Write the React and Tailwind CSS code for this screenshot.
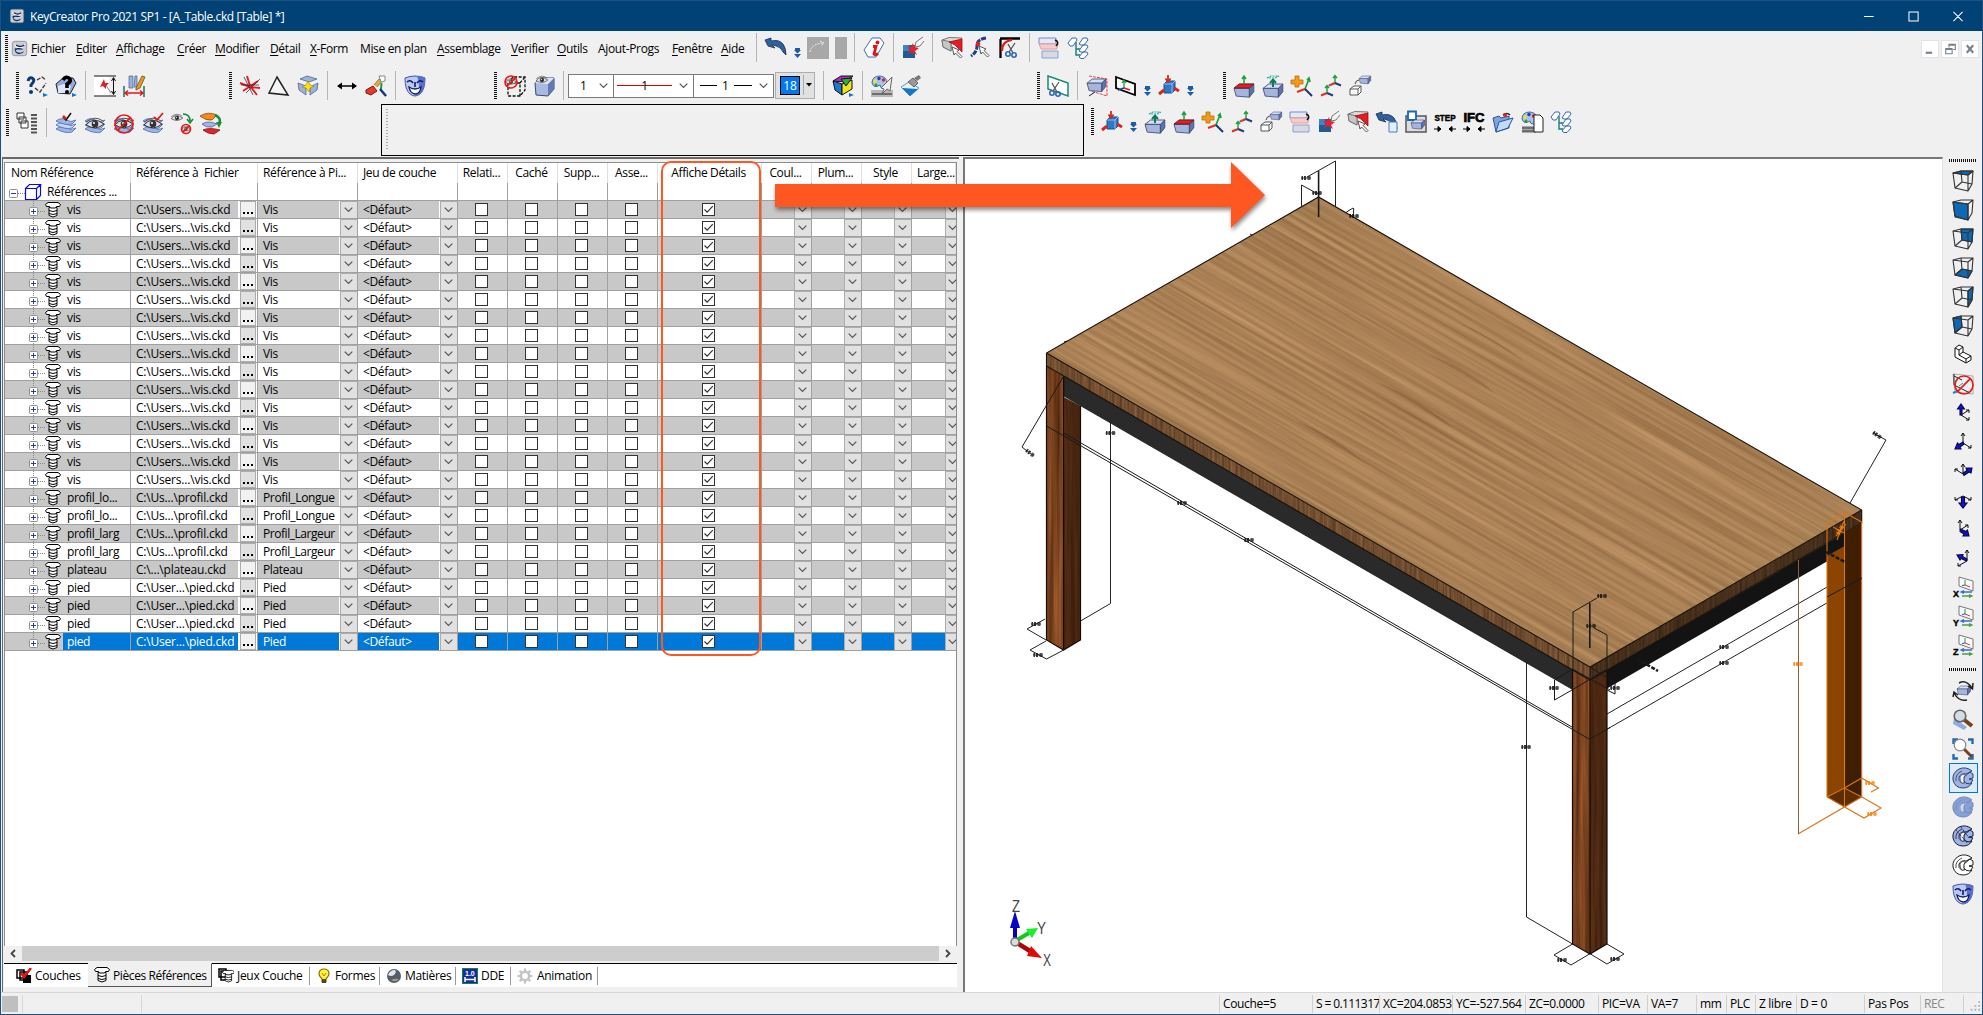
import React from "react";

/* ---------- small drawing primitives shared by the icons ---------- */
const Axes = ({ x = 0, y = 0 }) => (
  <g transform={`translate(${x} ${y})`} strokeWidth="1.4" fill="none">
    <path d="M0 0V-7M-2-5L0-7.500L2-5" stroke="#18a038" />
    <path d="M0 0L-6 2.500" stroke="#e03020" strokeWidth="2" />
    <path d="M0 0L6 2.500" stroke="#203c80" strokeWidth="2" />
  </g>
);
const Box = ({ x = 0, y = 0, s = 1 }) => (
  <g transform={`translate(${x} ${y}) scale(${s})`} stroke="#444c70" strokeWidth="0.8">
    <path d="M0 4L5 0H18L14 4Z" fill="#d4def6" />
    <path d="M0 4H14V12L2 11Z" fill="#a5b5de" />
    <path d="M14 4L18 0V7L14 12Z" fill="#5d72ae" />
  </g>
);
const Eye = ({ x = 11, y = 11, s = 1 }) => (
  <g transform={`translate(${x} ${y}) scale(${s})`}>
    <path d="M-9 1Q-2-8 9 0Q1 7-9 1Z" fill="#e2e2e2" stroke="#333" strokeWidth="1" />
    <path d="M-9-2Q0-9 8-3" stroke="#555" fill="none" />
    <circle r="3.3" fill="#333" />
    <circle cx="-1" cy="-1" r="1" fill="#fff" />
  </g>
);
const Ban = ({ x = 11, y = 11, r = 9 }) => (
  <g stroke="#e01c1c" strokeWidth="1.7" fill="none">
    <circle cx={x} cy={y} r={r} />
    <path d={`M${x - r * 0.7} ${y + r * 0.7}L${x + r * 0.7} ${y - r * 0.7}`} />
  </g>
);
const Layers = () => (
  <g fill="#9db6ea" stroke="#5673b8" strokeWidth="0.9">
    <path d="M1 17Q6 13 11 16T21 16L17 20Q11 22 1 17Z" />
    <path d="M1 13Q6 9 11 12T21 12L17 16Q11 18 1 13Z" fill="#c7d6f7" />
    <path d="M1 9Q6 5 11 8T21 8L17 12Q11 14 1 9Z" />
  </g>
);
const Pointer = ({ x = 0, y = 0 }) => (
  <path transform={`translate(${x} ${y})`} d="M0 0L7 3L5 4.5L10 9.5L8.5 11L3.5 6L2 8Z" fill="#fff" stroke="#444" strokeWidth="0.9" />
);
const Cube = ({ face }) => (
  <g stroke="#333" strokeWidth="1.1" fill="none" strokeLinejoin="round">
    {face === "top" && <path d="M1 3L9 1H21L16 5Z" fill="#0a6ab8" />}
    {face === "front" && <path d="M1 3L16 5L16 21L3 17Z" fill="#0a6ab8" />}
    {face === "back" && <path d="M9 1H21L20 14L10 12Z" fill="#0a6ab8" />}
    {face === "bottom" && <path d="M3 18L10 12L20 14L16 21Z" fill="#0a6ab8" />}
    {face === "right" && <path d="M16 5L21 1L20 14L16 21Z" fill="#0a6ab8" />}
    {face === "left" && <path d="M1 3L9 1L10 12L3 18Z" fill="#0a6ab8" />}
    <path d="M1 3L9 1H21L16 5ZM1 3L3 18L16 21L16 5M21 1L20 14L16 21" />
    {face !== "front" && <path d="M9 1L10 12L20 14M10 12L3 18" />}
  </g>
);
const Ring = ({ fill = "#9db4e4", stroke = "#33406c", hole = "#f4f7ff" }) => (
  <g fill={fill} stroke={stroke} strokeWidth="1">
    <path d="M20 4Q14-1 7 2Q0 6 1 13Q3 21 11 21Q17 21 20 16L16 13Q13 17 9.500 16Q6 14 7 10Q9 6 14 7Z" />
    <path d="M8 10Q9 7 13 7L12 16Q8 17 8 10Z" fill={hole} strokeWidth="0.700" />
    <path d="M12 10L18 5L21 7V11L17 12L21 13L18 17Q13 17 12 14Z" />
    <path d="M4 14Q3 7 10 4" fill="none" strokeWidth="0.800" />
  </g>
);
const Mask = () => (
  <g>
    <path d="M1 3Q11-1 21 3Q21 15 16 19Q11 23 6 19Q1 15 1 3Z" fill="#b9c8f4" stroke="#4255a8" />
    <path d="M13 1Q21 1 21 4Q21 15 16 19L11 21Q18 12 13 1Z" fill="#5b70cc" />
    <path d="M3 7Q6 4 9 8M13 8Q16 4 19 7M11 7V12" stroke="#101c60" strokeWidth="1.6" fill="none" />
    <path d="M5 12Q11 16 17 12Q16 19 11 19Q6 18 5 12Z" fill="#fff" stroke="#101c60" strokeWidth="1.3" />
  </g>
);
const Triad = ({ arrow }) => {
  const thin = {
    up: "M9 13L17 8M14 8H17V11M9 13L17 18M17 15V18H14",
    sw: "M11 12V2M9 5L11 2L13 5M11 12L19 17M19 14V17H16",
    ne: "M11 14V4M9 7L11 4L13 7M11 14L3 9M3 12V9H6",
    down: "M11 7L3 11M3 8V11H6M11 7L19 11M19 8V11H16",
    se: "M8 12V2M6 5L8 2L10 5M8 12L16 7M13 7H16V10",
    nw: "M15 14V3M13 6L15 3L17 6M15 14L6 19M6 16V19H9",
  };
  const fat = {
    up: "M8 13V7H5.500L9 2L12.500 7H10V13Z",
    sw: "M11 11L7 13.500L5.500 12L3 18H9L8 16L12 13Z",
    ne: "M11 13L15 10.500L14 8L20 8L19 13L17 12L12 15.500Z",
    down: "M9.500 8H12.500V14H15L11 19L7 14H9.500Z",
    se: "M8.500 11L14 13.500L15.500 12L17 18H11L12 16L8 13.500Z",
    nw: "M14.500 14L9 11.500L8 13L5 8L11 7.500L10.500 9.500L15 12Z",
  };
  return (
    <g fill="none" stroke="#111" strokeWidth="1">
      <path d={thin[arrow]} />
      <path d={fat[arrow]} stroke="#08083c" strokeWidth="1.1" fill="#1010e0" />
    </g>
  );
};
const PlaneAxis = ({ name }) => (
  <g>
    <path d="M7 1L21 5V15L7 10Z" fill="#fafafa" stroke="#777" />
    <path d="M13 9V4" stroke="#18a038" /><path d="M13 9L10 9.500" stroke="#3050c0" /><path d="M13 9L18 11" stroke="#e03020" />
    <path d="M9 16H20M12 14.500L9 16L12 17.500" stroke="#3c6ed0" strokeWidth="1.3" fill="none" /><path d="M10 20H20M17 18.500L20 20L17 21.500" stroke="#4aa040" strokeWidth="1.3" fill="none" />
    <text x="1" y="21" fontSize="9" fontWeight="900" letterSpacing="0" fontFamily="Liberation Sans, sans-serif" stroke="#000" strokeWidth="0.400">{name}</text>
  </g>
);
const Undo = () => <path d="M0 3L6 1L6 4Q14 2 18 7Q21 11 21 18L18 15Q16 10 11 9Q9 8 7 8L10 11L3 9Z" fill="#2f619f" stroke="#142c54" strokeWidth="0.8" />;
const Palette = () => (
  <g>
    <path d="M1 8Q1 1 9 1Q16 2 16 8Q16 14 12 13Q9 13 9 10Q3 14 1 8Z" fill="#a8c2e8" stroke="#47689c" />
    <circle cx="4" cy="6" r="1.700" fill="#ffe320" /><circle cx="8" cy="3.500" r="1.700" fill="#1d44b8" /><circle cx="12.500" cy="5" r="1.700" fill="#e02020" /><circle cx="5" cy="10" r="1.500" fill="#20a030" />
  </g>
);
const Bolt = () => (
  <g fill="#fff" stroke="#000" strokeWidth="1">
    <path d="M4 5.500H12V13.500Q8 16.500 4 13.500Z" /><path d="M4 8.500Q8 10.500 12 8.500M4 11.500Q8 13.500 12 11.500" fill="none" />
    <path d="M0.500 2.500L3 0.500H13L15.500 2.500L14.500 4.500H11.500L10.500 6H5.500L4.500 4.500H1.500Z" />
  </g>
);
const Logo = () => (
  <g>
    <rect x="0.500" y="0.500" width="21" height="21" rx="3" fill="#c9ccd2" stroke="#777d88" />
    <path d="M3 4Q11 11 19 4Q20 9 12 11Q5 11 3 4Z" fill="#fff" /><path d="M4 11Q11 9 17 12Q10 13 8 12L5 14Q9 20 18 15Q15 20 9 19Q4 18 4 11Z" fill="#0c2a66" /><path d="M6 6Q12 10 18 6" stroke="#0c2a66" strokeWidth="2" fill="none" />
  </g>
);

const Scissors = ({ x = 0, y = 0 }) => (
  <g transform={`translate(${x} ${y})`} fill="none">
    <path d="M10 0L4 9M3 1L8 10" stroke="#555" strokeWidth="1.300" /><circle cx="3" cy="11" r="2.200" stroke="#2f68b8" strokeWidth="1.600" /><circle cx="9" cy="12" r="2.200" stroke="#2f68b8" strokeWidth="1.600" />
  </g>
);
const AxesCube = (
  <g>
    <path d="M6 9L9 6H17V15L14 18H6Z" fill="#2b78cc" stroke="#1c4e8c" /><path d="M6 9H14V18M14 9L17 6" stroke="#8cc0f0" fill="none" />
    <path d="M10 0V6M7.500 3.500L10 7L12.500 3.500" stroke="#d82818" strokeWidth="1.800" fill="none" /><path d="M1 19L6 15M16 13L21 16" stroke="#d82818" strokeWidth="3" />
  </g>
);
const I = {
  logo: <Logo />,
  undo: <Undo />,
  info: <g><path d="M9 1H17L21 6L13 20H5L1 13Z" fill="#fff" stroke="#3a6fb8" /><path d="M10 9.500H13L11 17Q12 18.500 15 16.500" stroke="#e01414" strokeWidth="2.800" fill="none" /><circle cx="14.500" cy="5.500" r="1.900" fill="#e01414" /></g>,
  star: <g><path d="M1 8H13V21H1Z" fill="#1d5c94" /><path d="M1 8H7V14H1Z" fill="#3b87c4" /><path d="M11 6L12 10L17 11L13 14L15 18L10 15L6 17L8 13L5 10L9 10Z" fill="#e8202c" /><path d="M21 0L14 5L13 10L18 9L22 4" fill="#f4f4f4" stroke="#777" /></g>,
  face: <g><path d="M1 3L8 0.500L21 1L20 4L10 5V14L2 10Z" fill="#dcdcdc" stroke="#777" /><path d="M1 3L10 5V14L2 10Z" fill="#c6c6c6" stroke="#777" /><path d="M8 5L21 2V15L14 8Z" fill="#e41c24" stroke="#900" strokeWidth="0.700" /><Pointer x={11} y={10} /></g>,
  curve: <g><path d="M16 1Q7 2 7 9Q7 15 1 19" stroke="#223f80" strokeWidth="3" fill="none" strokeDasharray="5 1" /><circle cx="8" cy="7" r="2.300" fill="#e62020" /><Pointer x={9} y={9} /></g>,
  fillet: <g><path d="M1.500 21V2M1 1.500H21" stroke="#000" strokeWidth="2.300" fill="none" /><path d="M3 14Q3 4 13 3" stroke="#e01c1c" strokeWidth="2.200" fill="none" /><Scissors x={6} y={6} /></g>,
  sheet: <g><path d="M1 1H18V7H1Z" fill="#e4e8f2" stroke="#6e8cd4" /><path d="M1 7H20L19 12H3Z" fill="#f4cccc" stroke="#e6a0a0" /><path d="M4 14H20V21H4Z" fill="#d8dae0" stroke="#88a0d8" /><path d="M17 3Q22 5 18 9" stroke="#111" fill="none" strokeWidth="1.500" /></g>,
  tree: <g fill="#fff" stroke="#3468b4"><path d="M9 5V18H13M9 12H13" stroke="#158070" fill="none" strokeWidth="1.400" /><path d="M1 6L5 1H9L10 3L6 9H3ZM12 7L16 1H20L21 3L17 8H14ZM12 14L16 8H20L21 10L17 15H14ZM12 20L16 15H20L21 17L17 21.500H14Z" /></g>,
  qmark: <g><path d="M2 6Q3 2 6 3Q10 5 5 10V12" stroke="#0c3a78" strokeWidth="3" fill="none" /><circle cx="5" cy="17" r="2" fill="#0c3a78" /><path d="M9 13L14 17L20 8M11 5L16 2L20 5" stroke="#333" strokeWidth="1.300" fill="none" strokeDasharray="4 1.500" /><path d="M17 18L22 20L17 22Z" fill="#0878d8" /></g>,
  qbox: <g><path d="M1 9L8 3H18L21 8L15 19L3 18Z" fill="#96a9d8" stroke="#223" /><path d="M3 11L9 9L16 11L14 18H3Z" fill="#dfe6f8" /><path d="M8 5Q11 0 15 4Q16 7 12 9V13" stroke="#000" strokeWidth="3.600" fill="none" /><circle cx="12" cy="17" r="2" /><path d="M17 18L22 20L17 22Z" fill="#0878d8" /></g>,
  mesV: <g><rect x="0" y="1" width="15" height="20" fill="#fff" /><path d="M0 1H22M0 21H22M19.500 3V19M17.500 6L19.500 2.500L21.500 6M17.500 16L19.500 19.500L21.500 16" stroke="#111" fill="none" strokeWidth="1" /><path d="M11 9L17 18" stroke="#888" /><path d="M10 4L11 8L15 8L12 11L12 14L9 11L6 12L8 8Z" fill="#e41c24" /></g>,
  mesH: <g><path d="M6 1H10V13H6ZM12 1H14V12H11Z" fill="#9db1de" stroke="#4a5f94" strokeWidth="0.700" /><path d="M1 11V22M21 11V22" stroke="#107868" strokeWidth="1.500" /><path d="M2 18H20M5 15.500L2 18L5 20.500M17 15.500L20 18L17 20.500" stroke="#e01818" strokeWidth="1.500" fill="none" /><path d="M13 13L19 1L22 2L17 13L13 15Z" fill="#e79b22" stroke="#714a12" strokeWidth="0.800" /></g>,
  redx: <g><path d="M8 1L11 11L18 20M1 8L11 12L21 13M4 16L19 6" stroke="#e41c24" strokeWidth="1.900" fill="none" /><path d="M5 2L14 20M2 10L20 10M7 18L21 4" stroke="#222" strokeWidth="0.700" /></g>,
  tri: <path d="M9 2L20 20L1 18Z" fill="#f4f4f4" stroke="#222" strokeWidth="1.500" />,
  explode: <g><path d="M3 4L10 1L20 4L12 7ZM1 8L9 11V20L2 15ZM21 8L13 12V20L20 15Z" fill="#9db2d8" stroke="#516594" strokeWidth="0.800" /><path d="M11 6L13 10L17 11L13 13L12 17L9 13L5 12L9 10Z" fill="#ffe400" stroke="#a08000" strokeWidth="0.600" /></g>,
  harrow: <g><path d="M3 11H19" stroke="#000" strokeWidth="1.500" /><path d="M6 7.500L1 11L6 14.500ZM16 7.500L21 11L16 14.500Z" /></g>,
  wrench: <g><path d="M1 15L8 11L12 16L6 20L1 18Z" fill="#e23c28" stroke="#7d1810" /><path d="M9 10L14 4L17 6L12 12" fill="#e8a848" stroke="#9a6018" strokeWidth="0.800" /><path d="M14 1L20 1V6L16 7Z" fill="#fff" stroke="#888" /><path d="M16.500 8L16 14" stroke="#18a040" strokeWidth="2" fill="none" /><path d="M15 14L21 21" stroke="#14347c" strokeWidth="2.500" /></g>,
  mask: <Mask />,
  banbox: <g><path d="M4 8L9 2H21V15L16 21H4ZM4 8H16V21M16 8L21 2" stroke="#111" strokeWidth="1.300" strokeDasharray="3 1.500" fill="none" /><Eye x={7} y={7} s={0.600} /><Ban x={7} y={7} r={6} /></g>,
  eyebox: <g><path d="M2 8L8 3H21V14L15 21L3 20Z" fill="#a9b9e2" stroke="#38466c" /><path d="M15 9L21 3V14L15 21Z" fill="#647ab4" /><path d="M2 8L8 3H21L15 9Z" fill="#dce4f6" /><Eye x={9} y={5} s={0.650} /></g>,
  rgbbox: <g stroke="#111" strokeWidth="1"><path d="M1 6L9 1H21L14 7Z" fill="#b030c0" /><path d="M1 6L10 9V20L3 15Z" fill="#1c78d0" /><path d="M10 9L20 5V14L10 20Z" fill="#f2e51c" /><path d="M9 4L14 11L20 3Z" fill="#2cb03a" /><path d="M17 18L22 20L17 22Z" fill="#0878d8" stroke="none" /></g>,
  palette: <g><path d="M0 15H22V22H0Z" fill="#b8b8b8" /><path d="M1 19H21" stroke="#555" strokeWidth="1.500" /><Palette /><path d="M21 2L10 13L13 14L11 19L16 14L19 16Z" fill="#eee" stroke="#666" /></g>,
  paint: <g><path d="M1 12L9 7L19 13L10 21Z" fill="#e8f2fc" stroke="#5898d4" /><path d="M2 13L18 14L10 21Z" fill="#1674c4" /><path d="M8 7L13 3L18 8L14 12Z" fill="#999" stroke="#666" /><path d="M14 3L19 0L21 3L17 6Z" fill="#777" /></g>,
  cutplane: <g><path d="M1 1L21 8V21L1 14Z" fill="#fff" stroke="#158878" strokeWidth="1.500" /><Scissors x={2} y={7} /></g>,
  secbox: <g><path d="M3 1L21 4V21L5 16" fill="none" stroke="#e44" strokeDasharray="3 1" /><Box x={1} y={4} s={1.050} /><path d="M3 21L9 17" stroke="#222" /></g>,
  plane: <g><path d="M1 2L20 9V20L1 13Z" fill="#fafafa" stroke="#000" strokeWidth="1.800" /><path d="M9 13V6M7 8L9 5L11 8" stroke="#18a038" fill="none" strokeWidth="1.300" /><path d="M9 13L3 15" stroke="#2440a0" strokeWidth="1.500" /><path d="M9 13L15 15" stroke="#d02828" strokeWidth="1.500" /></g>,
  axcube: AxesCube,
  boxred: <g><Box x={1} y={9} s={1.100} /><path d="M1 13L6 9H21L16 13Z" fill="#e41c24" stroke="#611" strokeWidth="0.700" /><path d="M11 9V1M9 4L11 1L13 4" stroke="#18a038" strokeWidth="1.500" fill="none" /></g>,
  boxup: <g><Box x={1} y={9} s={1.100} /><path d="M11 12V5M8 8L11 4.500L14 8" stroke="#0c7a58" strokeWidth="2" fill="none" /><path d="M5 3L9 1H17L13 3Z" stroke="#20b0a0" strokeWidth="1.200" strokeDasharray="2 1" fill="none" /></g>,
  plus: <g><path d="M4 1H8V5H12V9H8V12H4V9H0V5H4Z" fill="#f39a1c" stroke="#b86e08" strokeWidth="0.800" /><path d="M14 14L18 4M16 5L18 3L19 7" stroke="#18a038" strokeWidth="1.700" fill="none" /><path d="M14 14L6 17" stroke="#e03020" strokeWidth="2.200" /><path d="M14 14L21 21" stroke="#1c3470" strokeWidth="2" /></g>,
  axes2: <g><Axes x={15} y={8} /><Axes x={7} y={18} /><path d="M8 11L14 7" stroke="#999" strokeDasharray="1 1" /></g>,
  boxes2: <g><Box x={10} y={1} s={0.650} /><path d="M1 14L5 11H12V17L9 20H1ZM1 14H9V20M9 14L12 11" fill="#fff" stroke="#555" /><path d="M6 9Q7 5 10 5" stroke="#444" fill="none" /></g>,
  undopage: <g><Undo /><path d="M13 11H21V21H13Z" fill="#e3efff" stroke="#4b7ac0" /></g>,
  savebox: <g><path d="M1 5H21V21H1Z" fill="#ddd" stroke="#555" strokeWidth="1.500" /><path d="M3 0.500H11V9H3Z" fill="#fff" stroke="#1468b4" strokeWidth="1.800" /><Box x={6} y={9} s={0.750} /></g>,
  step: <g><text x="0.500" y="10" fontSize="9" fontWeight="900" letterSpacing="0" fontFamily="Liberation Sans, sans-serif" textLength="21" lengthAdjust="spacingAndGlyphs" stroke="#000" strokeWidth="0.500">STEP</text><path d="M0 18H7M4 15.500L7 18L4 20.500ZM22 18H15M18 15.500L15 18L18 20.500Z" stroke="#000" strokeWidth="1" /></g>,
  ifc: <g><text x="0.500" y="11" fontSize="13" fontWeight="900" letterSpacing="0" fontFamily="Liberation Sans, sans-serif" textLength="21" lengthAdjust="spacingAndGlyphs" stroke="#000" strokeWidth="0.700">IFC</text><path d="M0 18H7M4 15.500L7 18L4 20.500ZM22 18H15M18 15.500L15 18L18 20.500Z" stroke="#000" strokeWidth="1" /></g>,
  folder: <g><path d="M1 7L7 5L9 7L17 5V17L4 21Z" fill="#7da4dc" stroke="#2c549c" /><path d="M7 11L21 7L16 17L4 21Z" fill="#c3dbf8" stroke="#2c549c" /><path d="M11 4Q15 1 18 4" stroke="#222" strokeWidth="1.500" fill="none" /><circle cx="13" cy="4" r="2" fill="#e02020" /></g>,
  palpage: <g><path d="M1 15H15V22H1Z" fill="#aaa" /><path d="M1 17H15M1 20H15" stroke="#333" /><Palette /><path d="M13 4H19L22 7V21H13Z" fill="#fff" stroke="#222" /></g>,
  list: <g fill="#fff" stroke="#333"><path d="M1 1H8V7H1ZM3 5H10V11H3ZM5 9H12V16H5Z" /><path d="M15 3H21M15 6.500H21M15 10H21M15 13.500H21M15 17H21M15 20.500H21" strokeWidth="2" stroke="#555" /></g>,
  laycheck: <g><Layers /><path d="M8 5L11 8L16 1" stroke="#111" strokeWidth="1.500" fill="none" /><path d="M8 4L11 7" stroke="#e01c1c" strokeWidth="2.500" /></g>,
  layeye: <g><Layers /><Eye y={12} /></g>,
  layban: <g><Layers /><Eye y={12} /><Ban y={12} /></g>,
  layeyecheck: <g><Layers /><Eye y={12} /><path d="M12 5L15 8L21 1" stroke="#e01c1c" strokeWidth="1.800" fill="none" /></g>,
  swap: <g><Eye x={6} y={6} s={0.650} /><path d="M12 2Q19 2 19 9M16 7L19 11L22 7" stroke="#18883c" strokeWidth="1.600" fill="none" /><Eye x={15} y={17} s={0.500} /><Ban x={15} y={17} r={4.500} /></g>,
  laymove: <g><path d="M0 4Q8-1 17 3L12 8Q6 9 0 4Z" fill="#f28a1c" stroke="#8c4a08" strokeWidth="0.800" /><path d="M2 12Q8 8 17 12L12 15Q6 16 2 12Z" fill="#9fb5e8" stroke="#4a64a8" strokeWidth="0.800" /><path d="M3 18Q9 15 20 18L14 22Q8 22 3 18Z" fill="#e42424" stroke="#801010" strokeWidth="0.800" /><path d="M15 3Q22 6 19 12" stroke="#1c8c3c" strokeWidth="2.600" fill="none" /><path d="M16 10L19 16L22 10Z" fill="#1c8c3c" /></g>,
  lshape: <path d="M3 4L7 1L11 3V8L19 12V16L14 19L3 13ZM3 4L7 6V11L14 15V19M7 6L11 3M7 11L11 8M14 15L19 12" fill="#fff" stroke="#111" />,
  noview: <g><path d="M1 1L21 3V21L3 19Z" fill="#f0f0f0" stroke="#aaa" /><path d="M2 1V12L18 20M2 3L10 7" stroke="#222" fill="none" /><path d="M1 20L6 18" stroke="#28c" strokeWidth="2" /><path d="M7 13L11 10" stroke="#28a870" /><Ban x={12} y={12} r={9} /></g>,
  rotate: <g><Box x={5} y={6} s={0.750} /><path d="M7 3Q14-1 20 8M21 3L20.500 9L16 6M15 20Q7 22 2 13M6 15L2 12L1 17" stroke="#222" strokeWidth="1.500" fill="none" /></g>,
  zoomall: <g><path d="M2 9L15 18L12 21L1 15Z" fill="#8fabe4" /><path d="M10 9L20 17" stroke="#74421c" strokeWidth="4" /><circle cx="8" cy="7" r="5.800" fill="#d4dce4" stroke="#666" strokeWidth="1.600" /></g>,
  zoomwin: <g><path d="M1.500 6V1.500H6M16 1.500H20.500V6M20.500 16V20.500H16M6 20.500H1.500V16" stroke="#1e6cb8" strokeWidth="2.400" fill="none" /><path d="M12 11L20 19" stroke="#74421c" strokeWidth="3" /><circle cx="8" cy="7" r="5.800" fill="#fff" stroke="#888" strokeWidth="1.200" /></g>,
  ringA: <Ring />,
  ringB: <Ring stroke="#7488ba" fill="#86a0d8" hole="#cbd8f2" />,
  ringC: <g><Ring stroke="#15193a" /><path d="M4 5L15 18M9 2L17 13" stroke="#15193a" strokeDasharray="2 1" strokeWidth="0.800" /></g>,
  ringD: <Ring fill="#fff" stroke="#222" hole="#fff" />,
};
const Icon = ({ n, cls = "w-[22px] h-[22px]" }) => (
  <svg viewBox="0 0 22 22" className={`${cls} shrink-0 overflow-visible`}>{I[n]}</svg>
);
const Sep = () => <div className="w-[3px] h-[29px] shrink-0 flex justify-center"><div className="w-px h-full bg-[#b5b5b5]" /></div>;
const Handle = () => <div className="w-[3px] h-[28px] shrink-0 bg-[repeating-linear-gradient(to_bottom,#111_0_1px,#f0f0f0_1px_2px)]" />;
const DD = () => (
  <svg viewBox="0 0 7 22" className="w-[7px] h-[22px] shrink-0"><path d="M1 11H6V13H7L3.500 16.500L0 13H1ZM0 17H7L3.500 21Z" fill="#1c5ca8" /></svg>
);
const Chev = () => <svg viewBox="0 0 9 6" className="w-[9px] h-[6px] shrink-0"><path d="M0.700 0.700L4.500 4.500L8.300 0.700" fill="none" stroke="#555" strokeWidth="1.200" /></svg>;
const Tools = ({ list, cls = "" }) => (
  <div className={`flex items-center gap-[7px] shrink-0 ${cls}`}>
    {list.map((k, i) => (k === "|" ? <Sep key={i} /> : k === "H" ? <Handle key={i} /> : k === "v" ? <DD key={i} /> : <Icon key={i} n={k} />))}
  </div>
);

const menu = [
  ["F", "ichier", "w-[45px]"], ["E", "diter", "w-[40px]"], ["A", "ffichage", "w-[61px]"], ["C", "réer", "w-[38px]"],
  ["M", "odifier", "w-[55px]"], ["D", "étail", "w-[40px]"], ["X", "-Form", "w-[50px]"], ["", "Mise en plan", "w-[77px]"],
  ["A", "ssemblage", "w-[74px]"], ["V", "erifier", "w-[46px]"], ["O", "utils", "w-[41px]"], ["", "Ajout-Progs", "w-[74px]"],
  ["F", "enêtre", "w-[49px]"], ["A", "ide", "w-[24px]"],
];

/* ---------- reference table ---------- */
const cols = ["w-[126px]", "w-[127px]", "w-[100px]", "w-[100px]", "w-[50px]", "w-[50px]", "w-[50px]", "w-[50px]", "w-[104px]", "w-[50px]", "w-[50px]", "w-[50px]", "w-[44px]"];
const heads = ["Nom Référence", "Référence à  Fichier", "Référence à Pi...", "Jeu de couche", "Relati...", "Caché", "Supp...", "Asse...", "Affiche Détails", "Coul...", "Plum...", "Style", "Large..."];
const rows = [
  ...Array(16).fill(["vis", "C:\\Users...\\vis.ckd", "Vis"]),
  ...Array(2).fill(["profil_lo...", "C:\\Us...\\profil.ckd", "Profil_Longue"]),
  ...Array(2).fill(["profil_larg", "C:\\Us...\\profil.ckd", "Profil_Largeur"]),
  ["plateau", "C:\\...\\plateau.ckd", "Plateau"],
  ...Array(4).fill(["pied", "C:\\User...\\pied.ckd", "Pied"]),
];
const DropBtn = ({ cls = "w-[17px] pr-[2px]" }) => (
  <div className={`${cls} h-[17px] shrink-0 bg-[#e1e1e1] border-l border-t border-[#adadad] flex items-center justify-center overflow-hidden`}><Chev /></div>
);
const Check = ({ on }) => (
  <div className="w-[13px] h-[13px] bg-white border border-[#333] shrink-0 -mt-px mr-[2px]">
    {on && <svg viewBox="0 0 11 11" className="block w-[11px] h-[11px]"><path d="M1.500 5.500L4.200 8.200L9.800 2.200" fill="none" stroke="#333" strokeWidth="1.200" /></svg>}
  </div>
);
const Row = ({ r, i }) => {
  const sel = i === rows.length - 1;
  const cell = "border-r border-[#a0a0a0] flex items-center shrink-0 h-full overflow-hidden";
  return (
    <div className={`flex h-[18px] border-b border-[#a0a0a0] whitespace-pre ${sel ? "bg-[#0078d7] text-white" : i % 2 ? "bg-white" : "bg-[#c8c8c8]"}`}>
      <div className={`${cols[0]} ${cell}`}>
        <div className={`w-[58px] h-full shrink-0 flex items-center ${sel ? "bg-[#c8c8c8]" : ""}`}>
          <svg viewBox="0 0 41 17" className="w-[41px] h-[17px] shrink-0">
            <path d={sel ? "M28.500 0V11" : "M28.500 0V17"} stroke="#888" strokeDasharray="1 1" /><path d="M33 10.500H41" stroke="#888" strokeDasharray="1 1" />
            <rect x="24.500" y="6.500" width="8" height="8" rx="1" fill="#fff" stroke="#919191" /><path d="M26 10.500H31M28.500 8V13" stroke="#2b3f8c" />
          </svg>
          <svg viewBox="0 0 16 16" className="w-[16px] h-[16px] shrink-0 -ml-px"><Bolt /></svg>
        </div>
        <span className="pl-[4px]">{r[0]}</span>
      </div>
      <div className={`${cols[1]} ${cell}`}>
        <div className="w-[103px] pl-[5px] shrink-0 tracking-[-0.2px]">{r[1]}</div>
        <div className="w-[23px] h-[17px] flex justify-end shrink-0">
          <div className="flex bg-white pl-[2px]">
            <div className={`w-[16px] h-[17px] mr-px border border-[#adadad] flex items-end justify-center gap-[2px] pb-[3px] ${i % 2 ? "bg-[#e1e1e1]" : "bg-[#f2f2f2]"}`}>
              <i className="w-[2px] h-[2px] bg-black" /><i className="w-[2px] h-[2px] bg-black" /><i className="w-[2px] h-[2px] bg-black" />
            </div>
          </div>
        </div>
      </div>
      <div className={`${cols[2]} ${cell}`}><div className={`w-[81px] pl-[5px] shrink-0 ${r[2] === "Profil_Largeur" ? "tracking-[-0.45px]" : ""}`}>{r[2]}</div><div className="w-px h-full bg-white shrink-0" /><DropBtn /></div>
      <div className={`${cols[3]} ${cell}`}><div className="w-[81px] pl-[5px] shrink-0">&lt;Défaut&gt;</div><div className="w-px h-full bg-white shrink-0" /><DropBtn /></div>
      {[4, 5, 6, 7, 8].map((c) => <div key={c} className={`${cols[c]} ${cell} justify-center`}><Check on={c === 8} /></div>)}
      {[9, 10, 11].map((c) => <div key={c} className={`${cols[c]} ${cell} justify-end`}><DropBtn /></div>)}
      <div className="w-[44px] flex items-center justify-end shrink-0 overflow-hidden"><DropBtn cls="w-[11px] [&>svg]:ml-[2px]" /></div>
    </div>
  );
};

/* ---------- 3D view ---------- */
const Label = ({ x, y, r = 0, c = "#111" }) => (
  <g transform={`translate(${x} ${y}) rotate(${r})`} fill={c} opacity="0.85"><rect x="-4.500" y="-2" width="1.500" height="4" /><rect x="-2" y="-2" width="2" height="4" /><rect x="1.500" y="-2" width="3" height="4" opacity="0.8" /><rect x="-5" y="-0.500" width="10" height="1" /></g>
);
const Scene = () => (
  <svg viewBox="965 159 977 833" className="block w-[977px] h-[833px]">
    <defs>
      <filter id="grain" x="0" y="0" width="1" height="1" colorInterpolationFilters="sRGB">
        <feTurbulence type="fractalNoise" baseFrequency="0.004 0.26" numOctaves="4" seed="7" />
        <feColorMatrix values="0.26 0 0 0 0.535  0.24 0 0 0 0.385  0.20 0 0 0 0.235  0 0 0 0 1" />
      </filter>
      <filter id="grainEdge" x="0" y="0" width="1" height="1" colorInterpolationFilters="sRGB">
        <feTurbulence type="fractalNoise" baseFrequency="0.4 0.02" numOctaves="2" seed="3" />
        <feColorMatrix values="0.3 0 0 0 0.29  0.23 0 0 0 0.185  0.15 0 0 0 0.11  0 0 0 0 1" />
      </filter>
      <filter id="grainLeg" x="0" y="0" width="1" height="1" colorInterpolationFilters="sRGB">
        <feTurbulence type="fractalNoise" baseFrequency="0.25 0.006" numOctaves="3" seed="11" />
        <feColorMatrix values="0.45 0 0 0 0.25  0.28 0 0 0 0.12  0.18 0 0 0 0.03  0 0 0 0 1" />
      </filter>
      <clipPath id="top"><path d="M1046.500 353L1318.600 197L1861.700 510L1590 667Z" /></clipPath>
      <clipPath id="edge"><path d="M1046.500 353L1590 667L1861.700 510V523L1590 680L1046.500 366Z" /></clipPath>
      <clipPath id="legL"><path d="M1046.500 366L1063.500 376V397L1080.500 406V640L1063.500 650L1046.500 640Z" /></clipPath>
      <clipPath id="legF"><path d="M1572.500 669L1590 680L1607 670V944L1590 954L1572.500 944Z" /></clipPath>
    </defs>
    <g stroke="#222" strokeWidth="1" fill="none">
      <path d="M1110.500 420V603.500L1080.500 621" />
      <path d="M1046 640L1027 629L1045 619M1046 641L1030 650L1046.500 659L1063.700 650" />
      <path d="M1526.500 643V917L1572.500 944L1554 955L1571 965L1590 953.700L1607 964L1624 954L1607 944" />
      <path d="M1607 714L1844.500 577M1590 739L1861.700 583" />
      <path d="M1850 503L1886 440L1873 433" />
      <path d="M1335.500 206V161L1307 177M1301.500 206V185L1318 194M1353.600 208V216M1345 213L1353 208M1250 234L1254 236M1064 342L1067 341" />
    </g>
    <g clipPath="url(#legL)"><rect x="1046" y="360" width="35" height="291" filter="url(#grainLeg)" /><path d="M1063.500 370H1081V651H1063.500Z" fill="#1c0c04" opacity="0.5" /></g>
    <path d="M1063.700 376L1572.500 669V689.500L1063.700 396Z" fill="#2a2a2a" stroke="#111" strokeWidth="0.700" />
    <path d="M1607 670L1845 533V551L1607 688.500Z" fill="#131313" />
    <path d="M1827 544L1845 533V551L1827 561Z" fill="#131313" />
    <g clipPath="url(#legF)"><rect x="1572" y="665" width="36" height="290" filter="url(#grainLeg)" /><path d="M1590 665H1608V955H1590Z" fill="#1c0c04" opacity="0.5" /></g>
    <path d="M1063.600 376V650M1046.500 366V640L1063.600 650L1080.500 640V406M1590 680V954M1572.500 669V944L1590 954L1607 944V670" stroke="#160a04" strokeWidth="1.200" fill="none" />
    <g clipPath="url(#edge)"><rect x="1046" y="350" width="816" height="332" filter="url(#grainEdge)" /><path d="M1590 667L1862 510V523L1590 680Z" fill="#140a04" opacity="0.450" /></g>
    <g clipPath="url(#top)">
      <g transform="translate(1046.500 353) rotate(30)">
        <rect x="-5" y="-280" width="800" height="290" filter="url(#grain)" />
        <g fill="#5c3818" opacity="0.250">
          <path d="M330-190Q380-197 410-189Q370-191 330-190ZM300-140Q350-147 390-138Q350-141 300-140ZM285-105Q320-111 360-104Q320-106 285-105ZM340-232Q380-238 420-231Q380-234 340-232ZM250-66Q290-72 330-64Q290-67 250-66Z" />
        </g>
      </g>
    </g>
    <path d="M1046.500 366V353L1318.600 197L1861.700 510V523L1590 680L1046.500 366M1046.500 353L1590 667L1861.700 510M1590 667V680" fill="none" stroke="#17110a" strokeWidth="1.100" />
    <path d="M1827 556L1844.500 546V807L1827 797Z" fill="#8b4500" />
    <path d="M1844.500 533L1861.700 523V797L1844.500 807Z" fill="#3f1f00" />
    <path d="M1827 797L1844.500 788L1861.700 797L1844.500 807Z" fill="#5b2d00" />
    <path d="M1827 797V523L1844.500 512.500L1861.700 522V797L1844.500 807ZM1844.500 512V807M1827 797L1844.500 788L1861.700 797M1844.500 788L1861.700 778L1878.500 788L1871 792M1862 797L1881 808L1864 818L1844.500 807L1798 834M1833 527L1844 533M1836 536L1846 524M1837 540L1844 521" fill="none" stroke="#d8751a" strokeWidth="1.100" />
    <path d="M1798.500 560V834" stroke="#8a6038" />
    <Label x={1798} y={664} c="#ff8000" /><Label x={1870} y={783} c="#ff8000" /><Label x={1872} y={814} c="#ff8000" /><Label x={1840} y={530} r={-60} c="#ff8000" />
    <g stroke="#1a1a1a" fill="none">
      <path d="M1063.700 376L1022 447L1027 451M1046.500 426L1590 739.500M1063.700 433L1572 727M1590 739L1610 727.500M1827 597L1862 578" />
      <path d="M1573 669V612L1597 598M1594 628L1607 635V670" /><path d="M1318.600 171V217M1589.800 603V648" strokeWidth="1.600" />
      <path d="M1572.500 669L1554.500 680V700L1572 690M1572.500 669L1610 690M1607 669L1572 690M1590 667L1615 683V694L1607 690" />
      <path d="M1637 659L1658 671M1826 552L1845 562" strokeWidth="2.500" strokeDasharray="4 1.500" />
    </g>
    {[[1306, 178, 0], [1317, 193, 0], [1354, 216, 0], [1030, 453, 38], [1110.500, 433, 0], [1036, 624, 0], [1038, 655, 0], [1182, 503, 0], [1249, 540, 0], [1526, 747, 0], [1602, 596, 0], [1591, 626, 0], [1554, 688, 0], [1615, 688, 0], [1562, 960, 0], [1615, 959, 0], [1724, 647, 0], [1724, 663, 0], [1877, 435, 35]].map(([x, y, r], i) => <Label key={i} x={x} y={y} r={r} />)}
    <g>
      <path d="M1015 941V922" stroke="#0505b8" strokeWidth="4" /><path d="M1010 928L1015 911L1020 928Z" fill="#0505c8" />
      <path d="M1017 940L1029 933" stroke="#12c81e" strokeWidth="4" /><path d="M1026 929L1038 928L1032 938Z" fill="#18f028" />
      <path d="M1017 943L1030 951" stroke="#a80808" strokeWidth="4.500" /><path d="M1031 946L1042 958L1027 956Z" fill="#e00808" />
      <circle cx="1015" cy="942" r="4" fill="#ddd" stroke="#777" strokeWidth="1.500" />
      <g fontFamily="Liberation Sans, sans-serif" fontSize="16" letterSpacing="0" fill="#444"><text x="1012" y="912" textLength="8" lengthAdjust="spacingAndGlyphs">Z</text><text x="1037" y="934" textLength="9" lengthAdjust="spacingAndGlyphs">Y</text><text x="1043" y="966" textLength="8" lengthAdjust="spacingAndGlyphs">X</text></g>
    </g>
  </svg>
);

const tabs = [
  ["Couches", "w-[84px]", <g><path d="M1 2H8V10H1ZM4 4H11V12H4Z" fill="#fff" stroke="#000" strokeWidth="1.500" /><path d="M7 7H15V15H7Z" /><path d="M5 5L8 9L15 0" stroke="#f01010" strokeWidth="2.500" fill="none" /></g>],
  ["Pièces Références", "w-[124px]", <Bolt />],
  ["Jeux Couche", "w-[98px]", <g><path d="M1 1H8V9H1ZM3 3H10V12H3Z" fill="#fff" stroke="#000" strokeWidth="1.500" /><g transform="translate(4 2) scale(.8)"><Bolt /></g></g>],
  ["Formes", "w-[70px]", <g><path d="M8 1Q13 1 13 6Q13 8 10 11V14H6V11Q3 8 3 6Q3 1 8 1Z" fill="#fff23c" stroke="#8a6a00" strokeWidth="1.200" /><path d="M6 12H10M6 14H10" stroke="#222" strokeWidth="1.500" /><path d="M6 5L8 8L10 5" stroke="#b08800" fill="none" /></g>],
  ["Matières", "w-[76px]", <g><circle cx="8" cy="8" r="7" fill="#555d68" /><path d="M2 7Q4 2 9 2Q11 4 8 7Q5 9 2 7Z" fill="#dfe6ee" /><path d="M5 12Q9 10 13 11Q10 15 5 12Z" fill="#a89c88" /></g>],
  ["DDE", "w-[55px]", <g><rect x="0.500" y="0.500" width="15" height="15" fill="#142c9c" stroke="#158048" /><text x="3" y="8" fontSize="7" fill="#fff" fontWeight="700" letterSpacing="0" fontFamily="Liberation Sans, sans-serif">1.0</text><path d="M3 9V14M13 9V14M3 11.500H13" stroke="#fff" strokeWidth="1.500" /></g>],
  ["Animation", "w-[87px]", <g><circle cx="8" cy="8" r="4.200" fill="none" stroke="#c4c4c4" strokeWidth="2.500" /><path d="M8 0.500V3.500M8 12.500V15.500M0.500 8H3.500M12.500 8H15.500M2.700 2.700L4.800 4.800M11.200 11.200L13.300 13.300M2.700 13.300L4.800 11.200M11.200 4.800L13.300 2.700" stroke="#c4c4c4" strokeWidth="2.200" /></g>],
];
const status = [
  ["Couche=5", "w-[93px]"], ["S = 0.111317", "w-[67px] tracking-[-0.6px]"], ["XC=204.0853", "w-[73px]"], ["YC=-527.564", "w-[73px]"], ["ZC=0.0000", "w-[73px]"],
  ["PIC=VA", "w-[49px]"], ["VA=7", "w-[49px]"], ["mm", "w-[30px]"], ["PLC", "w-[29px]"], ["Z libre", "w-[41px]"], ["D = 0", "w-[68px]"], ["Pas Pos", "w-[56px]"], ["REC", "w-[43px]"],
];

export default function App() {
  return (
    <div className="relative w-[1983px] h-[1015px] overflow-hidden bg-[#f0f0f0] border-x border-b border-[#1c5080] flex flex-col text-[12px] tracking-[-0.35px] text-black font-['Open_Sans','Noto_Sans',sans-serif] leading-[17px]">
      {/* title bar */}
      <div className="h-[31px] shrink-0 bg-[#004275] border-t border-[#1c5080] flex items-center text-white">
        <Icon n="logo" cls="w-[16px] h-[14px] ml-[8px]" />
        <span className="ml-[5px] text-[12px] tracking-[-0.4px]">KeyCreator Pro 2021 SP1 - [A_Table.ckd [Table] *]</span>
        <svg viewBox="0 0 110 12" className="ml-auto mr-[17px] w-[102px] h-[11px]" fill="none" stroke="#fff" strokeWidth="1.100"><path d="M0.500 6H11M49.500 1H59.500V11H49.500ZM98 1L108 11M108 1L98 11" /></svg>
      </div>
      {/* menu bar */}
      <div className="h-[35px] shrink-0 flex items-center">
        <div className="ml-[4px] flex items-center"><Handle /></div>
        <Icon n="logo" cls="w-[15px] h-[15px] ml-[4px]" />
        <div className="flex ml-[4px] w-[724px] shrink-0 whitespace-nowrap">
          {menu.map(([u, t, w], i) => <span key={i} className={`${w} shrink-0`}><u className="underline-offset-2">{u}</u>{t}</span>)}
        </div>
        <div className="flex items-center gap-[7px] -mt-[2px]">
          <Sep /><Icon n="undo" /><DD />
          <svg viewBox="0 0 22 22" className="w-[22px] h-[22px] bg-[#a8a8a8] -ml-px"><path d="M3 15Q4 7 16 6M13 4L17 6L14 9" stroke="#f0f0f0" fill="none" strokeDasharray="2 1" /></svg>
          <div className="w-[12px] h-[22px] bg-[#a8a8a8] -mx-px" />
          <Sep /><Icon n="info" /><Sep /><Icon n="star" /><Sep /><Icon n="face" /><Icon n="curve" /><Icon n="fillet" /><Sep /><Icon n="sheet" /><Icon n="tree" />
        </div>
        <div className="ml-auto mr-[3px] flex gap-[2px]">
          {["M3 11H9", "M6 6V3H12V8H10M6 4H12M3 7H9V12H3ZM3 8H9", "M4 4L10 11M10 4L4 11"].map((d, i) => (
            <svg key={i} viewBox="0 0 14 15" className="w-[18px] h-[18px] bg-white border border-[#e3e3e3]"><path d={d} fill="none" stroke="#74808f" strokeWidth={i === 1 ? 1 : 2} /></svg>
          ))}
        </div>
      </div>
      {/* second toolbar row */}
      <div className="h-[38px] shrink-0 flex items-center pt-px">
        <Tools cls="ml-[15px]" list={["H", "qmark", "qbox", "|", "mesV", "mesH"]} />
        <Tools cls="ml-[84px]" list={["H", "redx", "tri", "explode", "|", "harrow", "wrench", "|", "mask"]} />
        <Tools cls="ml-[68px]" list={["H", "banbox", "eyebox", "|"]} />
        <div className="flex h-[24px] ml-[3px] shrink-0">
          <div className="w-[46px] border border-[#7a7a7a] bg-white flex items-center justify-between pl-[11px] pr-[5px]">1<Chev /></div>
          <div className="w-[81px] -ml-px border border-[#7a7a7a] bg-white flex items-center justify-between pl-[3px] pr-[5px]">
            <div className="w-[55px] h-px bg-[#e00000] flex items-center justify-center">1</div><Chev />
          </div>
          <div className="w-[81px] -ml-px border border-[#7a7a7a] bg-white flex items-center justify-between pl-[6px] pr-[5px]">
            <div className="flex items-center gap-[5px]"><i className="w-[17px] h-px bg-black" />1<i className="w-[18px] h-px bg-black" /></div><Chev />
          </div>
          <div className="w-[40px] h-[27px] -mt-[2px] ml-px border border-[#adadad] bg-[#e1e1e1] flex items-center pl-[4px]">
            <div className="w-[20px] h-[19px] bg-[#0078f0] border border-black text-white flex items-center justify-center tracking-normal">18</div>
            <i className="w-px h-[20px] bg-[#aaa] ml-[3px]" /><svg viewBox="0 0 6 4" className="w-[6px] h-[4px] ml-[2px]"><path d="M0 0H6L3 3.500Z" /></svg>
          </div>
        </div>
        <Tools cls="ml-[7px]" list={["|", "rgbbox", "|", "palette", "paint"]} />
        <Tools cls="ml-[115px]" list={["H", "cutplane", "|", "secbox", "plane", "v", "axcube", "v"]} />
        <Tools cls="ml-[29px]" list={["H", "boxred", "boxup", "plus", "axes2", "boxes2"]} />
      </div>
      {/* third toolbar row */}
      <div className="h-[53px] shrink-0 flex items-start">
        <Tools cls="ml-[5px] mt-[4px]" list={["H", "list", "|", "laycheck", "layeye", "layban", "layeyecheck", "swap", "laymove"]} />
        <div className="ml-[159px] w-[703px] h-[52px] border border-black shrink-0 p-[4px]"><div className="w-[2px] h-full bg-[repeating-linear-gradient(to_bottom,#aaa_0_1px,transparent_1px_3px)]" /></div>
        <Tools cls="ml-[7px] mt-[4px]" list={["H", "axcube", "v", "boxup", "boxred", "plus", "axes2", "boxes2", "sheet", "star", "face", "undopage", "savebox", "step", "ifc", "folder", "palpage", "tree"]} />
      </div>
      {/* work area */}
      <div className="h-[835px] shrink-0 flex">
        <div className="ml-px w-[957px] shrink-0 border-t-2 border-l border-[#696969] flex flex-col">
          <div className="ml-px mt-[3px] w-[953px] h-[784px] border border-[#8c8c8c] border-b-0 bg-white overflow-hidden shrink-0">
            <div className="flex h-[20px] whitespace-pre">
              {heads.map((h, i) => <div key={i} className={`${cols[i]} shrink-0 border-r border-[#e0e0e0] flex items-center overflow-hidden pb-[2px] ${i === 0 ? "pl-[6px]" : i < 4 || i === 12 ? "pl-[5px]" : "justify-center pr-[2px]"}`}>{h}</div>)}
            </div>
            <div className="flex h-[18px] border-b border-[#a0a0a0]">
              {cols.map((c, i) => (
                <div key={i} className={`${c} shrink-0 ${i < 12 ? "border-r border-[#a0a0a0]" : ""} flex items-center`}>
                  {i === 0 && <>
                    <svg viewBox="0 0 40 18" className="w-[40px] h-[18px] shrink-0"><rect x="4.500" y="6.500" width="8" height="8" rx="1" fill="#fff" stroke="#919191" /><path d="M6 10.500H11" stroke="#2b3f8c" /><path d="M13 10.500H20" stroke="#888" strokeDasharray="1 1" /><path d="M20.500 5.500H31.500V16.500H20.500ZM20.500 5.500L24.500 1.500H35.500L31.500 5.500M35.500 1.500V12.500L31.500 16.500" fill="#fff" stroke="#0808e8" strokeWidth="1.200" /></svg>
                    <span className="ml-[2px]">Références ...</span>
                  </>}
                </div>
              ))}
            </div>
            {rows.map((r, i) => <Row key={i} r={r} i={i} />)}
          </div>
          <div className="ml-[2px] w-[951px] h-[15px] shrink-0 flex bg-[#f0f0f0] items-center">
            <svg viewBox="0 0 17 15" className="w-[17px] h-[15px]"><path d="M10 4L6.500 7.500L10 11" fill="none" stroke="#444" strokeWidth="1.800" /></svg>
            <div className="h-full w-[917px] bg-[#cdcdcd]" />
            <svg viewBox="0 0 17 15" className="w-[17px] h-[15px]"><path d="M7 4L10.500 7.500L7 11" fill="none" stroke="#444" strokeWidth="1.800" /></svg>
          </div>
          <div className="mt-[2px] ml-px w-[953px] h-[24px] shrink-0 flex bg-white whitespace-nowrap tracking-[-0.3px]">
            {tabs.map(([t, w, g], i) => (
              <div key={t} className={`${w} shrink-0 flex items-center ${i === 1 ? "bg-[#f0f0f0] border-b border-r border-[#555] border-t border-t-[#f0f0f0] pl-[6px] tracking-[-0.4px]" : "border-t border-t-black"} ${i === 0 ? "pl-[12px]" : i === 1 ? "" : "pl-[6px]"}`}>
                <svg viewBox="0 0 16 16" className="w-[16px] h-[16px] shrink-0">{g}</svg>
                <span className={i === 6 ? "ml-[4px]" : "ml-[3px]"}>{t}</span>
                {i > 1 && <i className="ml-auto w-px h-[18px] bg-[#999]" />}
              </div>
            ))}
            <div className="grow border-t border-black" />
          </div>
        </div>
        <div className="ml-[4px] w-[980px] shrink-0 border-l-2 border-t-2 border-[#777] bg-white border-r border-r-[#e3e3e3]"><Scene /></div>
        <div className="ml-[2px] flex flex-col w-[36px] shrink-0 items-center bg-[#f0f0f0] pt-[2px]">
          <div className="w-[28px] h-[3px] bg-[repeating-linear-gradient(to_right,#111_0_1px,#f0f0f0_1px_2px)]" />
          <div className="mt-[8px] flex flex-col gap-[7px]">
            {["top", "front", "back", "bottom", "right", "left"].map((f) => <svg key={f} viewBox="0 0 22 22" className="w-[22px] h-[22px]"><Cube face={f} /></svg>)}
            <Icon n="lshape" /><Icon n="noview" />
            {["up", "sw", "ne", "down", "se", "nw"].map((f) => <svg key={f} viewBox="0 0 22 22" className="w-[22px] h-[22px]"><Triad arrow={f} /></svg>)}
            {["X", "Y", "Z"].map((f) => <svg key={f} viewBox="0 0 22 22" className="w-[22px] h-[22px] overflow-visible"><PlaneAxis name={f} /></svg>)}
          </div>
          <div className="mt-[12px] w-[28px] h-[3px] bg-[repeating-linear-gradient(to_right,#111_0_1px,#f0f0f0_1px_2px)]" />
          <div className="mt-[9px] flex flex-col items-center gap-[7px]">
            <Icon n="rotate" /><Icon n="zoomall" /><Icon n="zoomwin" />
            <div className="-my-[4px] w-[29px] h-[30px] border border-[#0078d7] bg-[#dcecf9] flex items-center justify-center"><Icon n="ringA" /></div>
            <Icon n="ringB" /><Icon n="ringC" /><Icon n="ringD" /><Icon n="mask" />
          </div>
        </div>
      </div>
      {/* status bar */}
      <div className="h-[22px] shrink-0 border-t border-[#d7d7d7] flex items-center whitespace-nowrap">
        <div className="w-[16px] h-[16px] bg-[#bfbfbf] ml-px" />
        <i className="w-px h-[18px] bg-[#d7d7d7] ml-[4px]" /><i className="w-px h-[18px] bg-[#d7d7d7] ml-[118px]" />
        <div className="flex ml-auto">
          {status.map(([t, w]) => <div key={t} className={`${w} h-[18px] shrink-0 border-l border-[#d0d0d0] pl-[3px] ${t === "REC" ? "text-[#888]" : ""}`}>{t}</div>)}
          <svg viewBox="0 0 19 18" className="w-[19px] h-[18px] border-l border-[#d0d0d0]"><path d="M15 6H17V8H15ZM11 10H13V12H11ZM15 10H17V12H15ZM7 14H9V16H7ZM11 14H13V16H11ZM15 14H17V16H15Z" fill="#b5b5b5" /></svg>
        </div>
      </div>
      {/* annotations lying over the panels */}
      <div className="absolute left-[660px] top-[161px] w-[100px] h-[495px] border-2 border-[#ff5722] rounded-[10px]" />
      <svg viewBox="0 0 500 76" className="absolute left-[769px] top-[157px] w-[500px] h-[76px] drop-shadow-[1px_3px_2px_rgba(0,0,0,0.45)]"><path d="M5 27H461V5L495 38L461 71V50H5Z" fill="#ff5722" /></svg>
    </div>
  );
}
